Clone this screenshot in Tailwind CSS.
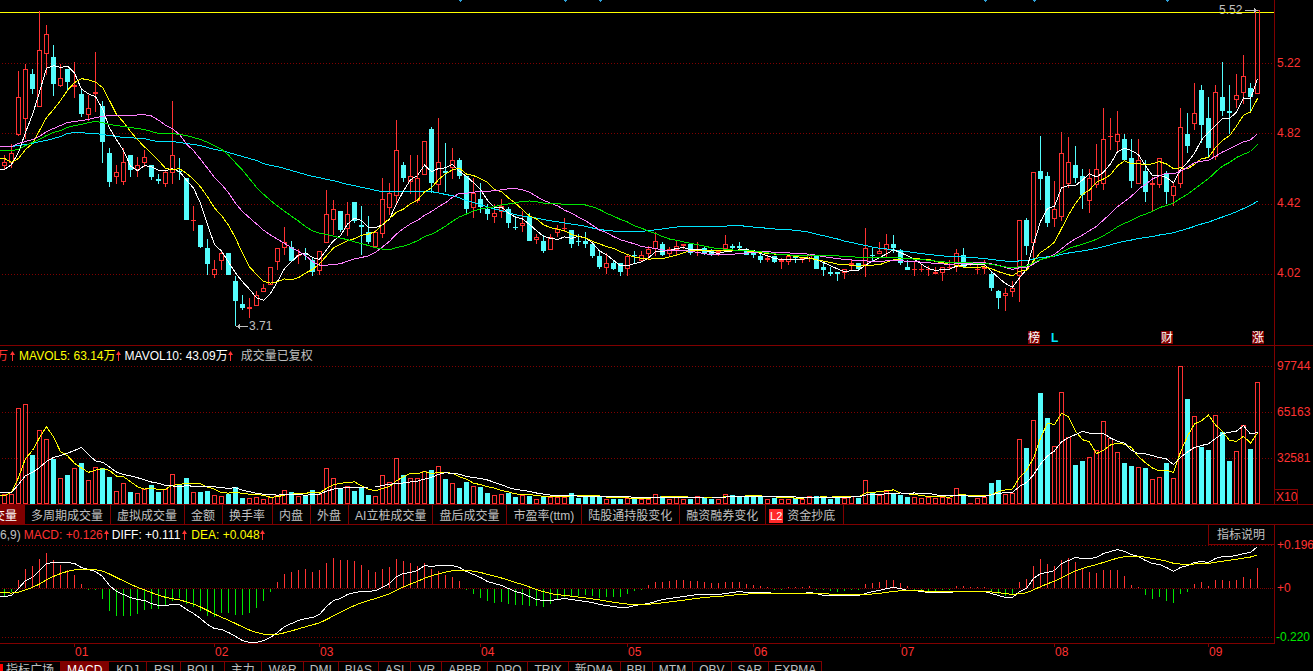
<!DOCTYPE html>
<html lang="zh-CN">
<head>
<meta charset="utf-8">
<title>K线图</title>
<script src="https://cdn.jsdelivr.net/npm/@tailwindcss/browser@4"></script>
</head>
<body class="flex h-screen flex-col overflow-hidden bg-black font-['Liberation_Sans','Noto_Sans_CJK_SC',sans-serif] text-xs text-[#c0c0c0]">

<!-- price pane -->
<section class="flex h-[346px] shrink-0 border-b border-[#800000]">
  <svg id="price" class="h-[345px] min-w-0 flex-1" shape-rendering="crispEdges" role="img" aria-label="日K线"></svg>
  <div class="w-[39px] shrink-0 overflow-hidden border-l border-[#800000] pt-7 pl-0.5 text-[#ff3232]">
    <div class="h-[70px] leading-[70px]">5.22</div>
    <div class="h-[70px] leading-[70px]">4.82</div>
    <div class="h-[70px] leading-[70px]">4.42</div>
    <div class="h-[70px] leading-[70px]">4.02</div>
  </div>
</section>

<!-- volume pane -->
<section class="flex h-[159px] shrink-0 border-b border-[#800000]">
  <div class="flex min-w-0 flex-1 flex-col">
    <div class="flex h-5 items-center whitespace-nowrap">
      <span class="-ml-1 text-[#ff3232]">万</span>
      <svg class="ml-0.5 h-2.5 w-[5px]" viewBox="0 0 5 10"><path d="M2.5 0L5 4H3V10H2V4H0Z" fill="#ff3232"/></svg>
      <span class="ml-1 text-[#ffff00]">MAVOL5: 63.14万</span>
      <svg class="h-2.5 w-[5px]" viewBox="0 0 5 10"><path d="M2.5 0L5 4H3V10H2V4H0Z" fill="#ff3232"/></svg>
      <span class="ml-1 text-white">MAVOL10: 43.09万</span>
      <svg class="h-2.5 w-[5px]" viewBox="0 0 5 10"><path d="M2.5 0L5 4H3V10H2V4H0Z" fill="#ff3232"/></svg>
      <span class="ml-2">成交量已复权</span>
    </div>
    <svg id="volume" class="h-[138px] w-full" shape-rendering="crispEdges" role="img" aria-label="成交量"></svg>
  </div>
  <div class="flex w-[39px] shrink-0 flex-col overflow-hidden border-l border-[#800000] text-[#ff3232]">
    <div class="h-10 pl-0.5 leading-10">97744</div>
    <div class="h-[52px] pl-0.5 leading-[52px]">65163</div>
    <div class="h-10 pl-0.5 leading-10">32581</div>
    <div class="mt-auto h-[15px] w-[23px] border-t border-r border-[#800000] pl-px leading-[14px]">X10</div>
  </div>
</section>

<nav class="flex h-5 shrink-0 border-b border-[#800000] whitespace-nowrap" aria-label="成交量指标">
  <button class="-ml-[25px] border-r border-[#800000] bg-[#800000] pt-0.5 pr-[7px] pl-1.5 text-white">成交量</button>
  <button class="border-r border-[#800000] pt-0.5 pr-[7px] pl-1.5">多周期成交量</button>
  <button class="border-r border-[#800000] pt-0.5 pr-[7px] pl-1.5">虚拟成交量</button>
  <button class="border-r border-[#800000] pt-0.5 pr-[7px] pl-1.5">金额</button>
  <button class="border-r border-[#800000] pt-0.5 pr-[7px] pl-1.5">换手率</button>
  <button class="border-r border-[#800000] pt-0.5 pr-[7px] pl-1.5">内盘</button>
  <button class="border-r border-[#800000] pt-0.5 pr-[7px] pl-1.5">外盘</button>
  <button class="border-r border-[#800000] pt-0.5 px-1.5">AI立桩成交量</button>
  <button class="border-r border-[#800000] pt-0.5 pr-[7px] pl-1.5">盘后成交量</button>
  <button class="border-r border-[#800000] pt-0.5 pr-[7px] pl-1.5">市盈率(ttm)</button>
  <button class="border-r border-[#800000] pt-0.5 pr-[7px] pl-1.5">陆股通持股变化</button>
  <button class="border-r border-[#800000] pt-0.5 pr-[7px] pl-1.5">融资融券变化</button>
  <button class="flex items-center gap-1 border-r border-[#800000] pt-0.5 pr-2 pl-[3px]"><span class="w-3.5 bg-[#ff2a2a] text-center text-[11px] leading-[14px] text-white">L2</span>资金抄底</button>
</nav>

<!-- MACD pane -->
<section class="flex h-[118px] shrink-0">
  <div class="flex min-w-0 flex-1 flex-col">
    <div class="flex h-5 items-center whitespace-nowrap">
      <span>6,9)</span>
      <span class="ml-[3px] text-[#ff3232]">MACD: +0.126</span>
      <svg class="ml-px h-2.5 w-[5px]" viewBox="0 0 5 10"><path d="M2.5 0L5 4H3V10H2V4H0Z" fill="#ff3232"/></svg>
      <span class="ml-[3px] text-white">DIFF: +0.111</span>
      <svg class="ml-0.5 h-2.5 w-[5px]" viewBox="0 0 5 10"><path d="M2.5 0L5 4H3V10H2V4H0Z" fill="#ff3232"/></svg>
      <span class="ml-1 text-[#ffff00]">DEA: +0.048</span>
      <svg class="h-2.5 w-[5px]" viewBox="0 0 5 10"><path d="M2.5 0L5 4H3V10H2V4H0Z" fill="#ff3232"/></svg>
      <button class="ml-auto h-5 border-b border-l border-[#800000] pr-[9px] pl-2">指标说明</button>
    </div>
    <svg id="macd" class="h-[98px] w-full" shape-rendering="crispEdges" role="img" aria-label="MACD"></svg>
  </div>
  <div class="flex w-[39px] shrink-0 flex-col overflow-hidden border-l border-[#800000] pl-0.5 text-[#ff3232]">
    <div class="h-10 leading-10">+0.196</div>
    <div class="h-[46px] leading-[46px]">+0</div>
    <div class="mt-auto -ml-px leading-3 text-[#00e600]">-0.220</div>
  </div>
</section>

<!-- months -->
<div class="mr-[38px] h-[18px] shrink-0 border-t border-[#800000]">
  <svg id="months" class="h-[17px] w-full"></svg>
</div>

<nav class="flex h-[17px] shrink-0 whitespace-nowrap" aria-label="技术指标">
  <button class="flex h-full items-start border-t border-r border-[#800000] pr-1.5"><span class="mt-0.5 mr-[3px] h-4 w-[3px] bg-[#ff0000]"></span>指标广场</button>
  <button class="h-full border-t border-r border-[#800000] bg-[#800000] px-1.5 text-white">MACD</button>
  <button class="h-full border-t border-r border-[#800000] px-[7px]">KDJ</button>
  <button class="h-full border-t border-r border-[#800000] pr-1.5 pl-[7px]">RSI</button>
  <button class="h-full border-t border-r border-[#800000] px-1.5">BOLL</button>
  <button class="h-full border-t border-r border-[#800000] px-1.5">主力</button>
  <button class="h-full border-t border-r border-[#800000] pr-1.5 pl-[7px]">W&amp;R</button>
  <button class="h-full border-t border-r border-[#800000] px-1.5">DMI</button>
  <button class="h-full border-t border-r border-[#800000] px-1.5">BIAS</button>
  <button class="h-full border-t border-r border-[#800000] px-1.5">ASI</button>
  <button class="h-full border-t border-r border-[#800000] pr-1.5 pl-[7px]">VR</button>
  <button class="h-full border-t border-r border-[#800000] px-1.5">ARBR</button>
  <button class="h-full border-t border-r border-[#800000] pr-1.5 pl-[7px]">DPO</button>
  <button class="h-full border-t border-r border-[#800000] px-1.5">TRIX</button>
  <button class="h-full border-t border-r border-[#800000] px-1.5">新DMA</button>
  <button class="h-full border-t border-r border-[#800000] px-1.5">BBI</button>
  <button class="h-full border-t border-r border-[#800000] px-1.5">MTM</button>
  <button class="h-full border-t border-r border-[#800000] px-1.5">OBV</button>
  <button class="h-full border-t border-r border-[#800000] px-1.5">SAR</button>
  <button class="h-full border-t border-r border-[#800000] px-[5px]">EXPMA</button>
</nav>

<script>
const RED = '#ff3232', CYAN = '#54fcfc', GRID = '#800000';
// direction, high, body top, body bottom, low (pane units, one day per entry)
const days = `R155,162,166,169 R144,153,163,168 R71,97,135,136 R64,69,119,139 C69,74,89,94 R11,50,107,107 R25,34,54,75 C45,57,84,96 R64,78,86,87 C69,69,82,91
R62,85,87,98 C88,94,114,117 R95,108,115,121 R52,92,94,112 C101,106,142,163 C148,153,182,187 R165,172,177,184 R148,162,182,185 C155,155,170,177 R157,165,170,177
R150,157,163,167 C165,165,177,180 C174,179,180,184 R171,172,184,187 R101,155,173,184 C158,171,171,180 C178,178,220,220 R206,220,220,231 C225,225,247,248 C239,248,264,275
R260,269,275,278 R252,253,261,270 C253,253,275,275 C276,281,301,326 C295,304,308,310 R298,307,308,318 R291,295,306,306 R284,288,292,292 R267,267,285,285 R248,248,262,270
R227,242,248,255 C241,247,261,262 R249,255,255,264 C248,253,255,260 C258,260,272,276 R251,251,271,275 R190,214,243,243 R200,209,220,235 C211,211,230,232 R202,214,229,236
C202,202,221,223 C206,225,227,255 C216,232,242,244 R230,232,247,247 R178,199,234,238 R183,193,208,215 R120,150,196,203 C162,165,178,182 R155,176,182,194 R155,178,201,203
R141,141,175,175 C127,129,183,193 R118,162,185,193 C143,171,173,192 R148,160,168,179 C158,160,176,179 C176,176,209,213 R178,193,208,218 C183,199,207,213 C204,209,214,220
R204,213,217,223 R199,206,212,218 C207,209,223,228 C216,227,227,230 R211,223,226,232 C213,217,241,241 R234,237,240,244 C235,241,251,253 R234,237,250,250 R225,229,233,237
R218,228,228,232 C230,230,244,248 C234,241,241,246 C232,241,244,248 C243,244,256,258 C251,256,267,269 R253,263,268,274 C260,263,269,270 C263,263,272,276 R255,256,269,276
C251,255,255,264 R251,255,261,262 R246,249,254,259 R232,241,249,256 C242,244,255,256 R247,249,254,256 R241,246,250,255 R244,244,245,249 C243,244,253,255 R242,252,252,256
C246,248,254,255 C249,250,255,256 R250,251,252,256 R235,244,249,249 C244,246,248,250 C242,246,248,250 C248,250,255,255 C253,253,255,258 C254,256,260,263 R256,258,259,262
C256,256,262,263 R258,260,261,269 R255,256,262,265 C255,256,258,263 R257,258,259,263 R254,255,259,262 C255,256,269,269 C263,267,270,276 C267,272,274,276 C272,272,274,281
R269,269,273,279 R260,263,265,270 C263,263,269,270 R228,248,265,277 C248,255,255,261 R242,251,254,254 R234,244,250,257 C235,244,248,253 C249,250,263,265 C260,267,270,270
R262,269,269,276 R264,269,269,272 R266,269,269,276 R267,272,273,273 R267,267,273,281 R260,267,267,270 R249,253,267,272 C248,255,267,267 R263,264,264,266 R263,269,269,274
R260,267,269,274 C271,274,288,291 C290,291,298,309 R288,293,296,311 R281,288,292,297 R220,220,276,302 C218,220,246,255 R172,172,243,258 C136,171,179,200 C172,176,223,227
R181,209,219,227 R132,153,217,221 R137,162,184,188 C146,165,178,183 C169,176,195,209 R169,178,201,213 R144,169,185,188 R108,139,184,190 R118,136,136,150 R111,134,142,152
C134,139,160,160 C139,158,181,188 R139,160,184,184 C160,171,192,202 R177,183,185,211 R158,158,185,188 C171,173,192,204 R182,186,196,206 R108,127,184,188 C113,134,146,153
R83,113,124,130 C85,90,125,143 C97,118,148,157 R85,92,157,160 C62,97,111,116 C85,111,113,134 R74,95,100,108 R55,76,93,104 C83,88,97,112 R10,10,94,94`
  .split(/\s+/).map(s => [s[0], ...s.slice(1).split(',').map(Number)]);

const vol = [10,10,96,100,49,74,65,45,26,29,36,41,24,37,36,27,13,21,12,11,15,19,12,15,30,19,26,12,12,13,9,8,10,17,6,6,7,5,7,9,14,12,8,8,14,10,36,26,15,18,13,16,9,8,29,22,46,29,26,26,33,34,38,25,21,16,22,18,17,11,9,10,11,7,9,8,5,7,7,7,7,11,6,7,7,7,5,5,5,6,5,5,5,10,8,5,8,5,5,8,6,5,5,10,9,7,7,7,8,5,6,5,5,6,5,8,8,6,5,8,6,8,6,24,12,9,13,10,9,7,7,6,7,6,7,6,16,9,1,6,7,21,24,10,11,65,56,84,111,86,58,112,67,39,43,47,54,83,66,52,41,38,37,36,25,27,41,26,138,105,88,57,54,89,72,43,53,79,55,122];

const hist = [-8,-3,8,19,22,29,35,28,23,18,13,4,-1,-1,-10,-22,-27,-27,-27,-25,-21,-20,-20,-16,-12,-9,-15,-18,-22,-27,-28,-24,-24,-26,-26,-24,-19,-12,-3,6,14,16,18,19,16,18,25,30,28,28,27,23,18,16,19,21,29,27,25,22,25,19,17,13,11,7,-1,-5,-9,-12,-14,-13,-15,-16,-16,-17,-17,-18,-15,-11,-8,-8,-7,-6,-7,-9,-8,-8,-8,-5,-2,-1,3,6,6,7,8,8,7,7,6,5,5,6,6,6,4,3,2,1,-1,-1,1,1,1,2,-1,-1,-2,-3,-2,-1,-1,4,5,6,8,8,5,2,-1,-1,-2,-2,-1,-1,2,2,1,1,1,-3,-5,-7,-6,6,9,22,29,24,22,28,30,26,20,16,15,18,18,18,12,3,1,-6,-10,-8,-12,-14,-5,-3,4,6,2,8,8,7,8,11,9,20];

const diff = [596,595,588,580,577,570,563,562,562,562,563,567,569,571,576,585,591,594,597,599,600,603,605,605,604,604,609,613,618,624,628,629,632,636,640,642,642,640,637,632,626,623,620,618,617,614,606,600,598,594,592,591,591,590,587,583,576,573,572,570,565,566,565,565,565,567,571,574,577,581,583,585,588,591,593,596,599,600,600,599,598,599,600,601,602,604,605,606,607,607,605,604,603,601,599,598,597,596,595,594,594,594,594,593,592,591,592,592,592,592,593,593,593,593,593,592,593,595,595,595,595,595,595,593,591,590,588,587,588,590,590,591,592,592,592,592,591,591,591,591,591,593,595,597,597,591,588,578,573,572,570,563,560,557,558,558,557,553,551,549,551,554,556,560,563,564,567,571,567,565,562,561,562,558,556,556,555,553,552,546];

// line values for the days before a full averaging window is in view
const lead5 = [169,164,152,132], lead10 = [158,162,158,149,143,130,117,109,100];
const lead20 = [146,146,143,141,139,136,131,128,125,122,121,120,119,117,116,115,115,115,115];
const lead30 = [150,150,149,145,142,139,135,132,130,127,125,124,122,121,122,124,125,126,127,128,129,131,133,133,133,134,135,137,139];
const lead60 = [146,146,145,144,143,141,140,138,136,133,132,132,133,133,134,135,136,137,137,138,138,140,141,141,141,142,143,144,145,147,149,150,152,154,156,158,160,163,165,166,168,170,172,174,176,177,179,180,182,184,185,187,188,190,191,191,191,191,191];

const close = days.map(d => d[0] === 'R' ? d[2] : d[3]);
const X = i => 4 + 7 * i;
const average = (v, n, lead) => v.map((_, i) =>
  i < n - 1 ? lead[i] : v.slice(i - n + 1, i + 1).reduce((a, b) => a + b) / n);
const line = (v, color, y = a => a) => {
  const p = v.map((a, i) => `${X(i) + .5},${(y(a) + .5).toFixed(1)}`);
  return `<polyline fill="none" stroke="${color}" points="-2.5,${(y(v[0]) + .5).toFixed(1)} ${p.join(' ')}"/>`;
};
const grid = (y, dash = '1 2') => `<line x1="2" x2="100%" y1="${y + .5}" y2="${y + .5}" stroke="${GRID}" stroke-dasharray="${dash}"/>`;
const box = (x, top, bottom, red) => red
  ? `<rect x="${x - 1.5}" y="${top + .5}" width="4" height="${Math.max(bottom - top - 1, 1)}" fill="none" stroke="${RED}"/>`
  : `<rect x="${x - 2}" y="${top}" width="5" height="${bottom - top}" fill="${CYAN}"/>`;
const wick = (x, a, b, c) => b > a ? `<rect x="${x}" y="${a}" width="1" height="${b - a}" fill="${c}"/>` : '';

// price pane
let s = [63, 133, 204, 274].map(y => grid(y)).join('');
s += `<text x="1219" y="14" font-size="12" fill="#c0c0c0">5.52</text>`;
s += `<rect y="12" width="100%" height="1" fill="#ffff00"/>`;
days.forEach(([k, hi, top, bot, lo], i) => {
  const x = X(i), red = k === 'R', c = red ? RED : CYAN;
  if (bot - top < 2) s += wick(x, hi, lo, c) + `<rect x="${x - 2}" y="${top}" width="5" height="${bot - top + 1}" fill="${c}"/>`;
  else s += wick(x, hi, top, c) + wick(x, bot, lo, c) + box(x, top, bot, red);
});
s += line(average(close, 60, lead60), '#00e6ff');
s += line(average(close, 5, lead5), '#ffffff');
s += line(average(close, 10, lead10), '#ffff00');
s += line(average(close, 20, lead20), '#ff80ff');
s += line(average(close, 30, lead30), '#00e600');
s += `<g fill="#c0c0c0"><rect x="1245" y="10" width="12" height="1"/><path d="M1254 8V13L1258 10.5Z"/>
  <rect x="236" y="326" width="12" height="1"/><path d="M240 324V329L236 326.5Z"/>
  <text x="249" y="330" font-size="12">3.71</text></g>`;
[460, 565, 600, 985, 1034, 1167].forEach(x => s += `<path d="M${x - 1} 0h3v1h-1v1h-1v-1h-1z" fill="#2fa0d8"/>`);
[['榜', 1028], ['财', 1161], ['涨', 1252]].forEach(([t, x]) =>
  s += `<rect x="${x}" y="331" width="12" height="13" fill="${GRID}"/><text x="${x}" y="342" font-size="12" fill="#fff">${t}</text>`);
s += `<text x="1051" y="342" font-size="12" font-weight="bold" fill="#00e6ff">L</text>`;
price.innerHTML = s;

// volume pane, baseline at the bottom edge
const up = v => 137 - v;
s = [0, 46, 92].map(y => grid(y)).join('');
vol.forEach((v, i) => s += box(X(i), 138 - v, 138, days[i][0] === 'R'));
s += line(average(vol, 5, [8, 11, 26, 45]), '#ffff00', up);
s += line(average(vol, 10, [11, 11, 19, 28, 31, 36, 42, 46, 48]), '#ffffff', up);
volume.innerHTML = s;

// MACD pane, zero axis at y = 43
s = grid(0) + grid(43, '1 1') + grid(92);
hist.forEach((h, i) => s += h > 0
  ? `<rect x="${X(i)}" y="${43 - h}" width="1" height="${h}" fill="${RED}"/>`
  : `<rect x="${X(i)}" y="44" width="1" height="${-h}" fill="#00e600"/>`);
let e = 592;
const dea = diff.map((d, i) => i ? e += (d - e) / 5 : e);
s += line(diff, '#ffffff', a => a - 545) + line(dea, '#ffff00', a => a - 545);
macd.innerHTML = s;

// month marks
months.innerHTML = [74, 214, 319, 480, 627, 753, 900, 1054, 1208].map((x, i) =>
  `<rect x="${x}" y="0" width="1" height="3" fill="${GRID}"/><text x="${x + 1}" y="12" font-size="12" fill="${RED}">0${i + 1}</text>`).join('');
</script>
</body>
</html>
